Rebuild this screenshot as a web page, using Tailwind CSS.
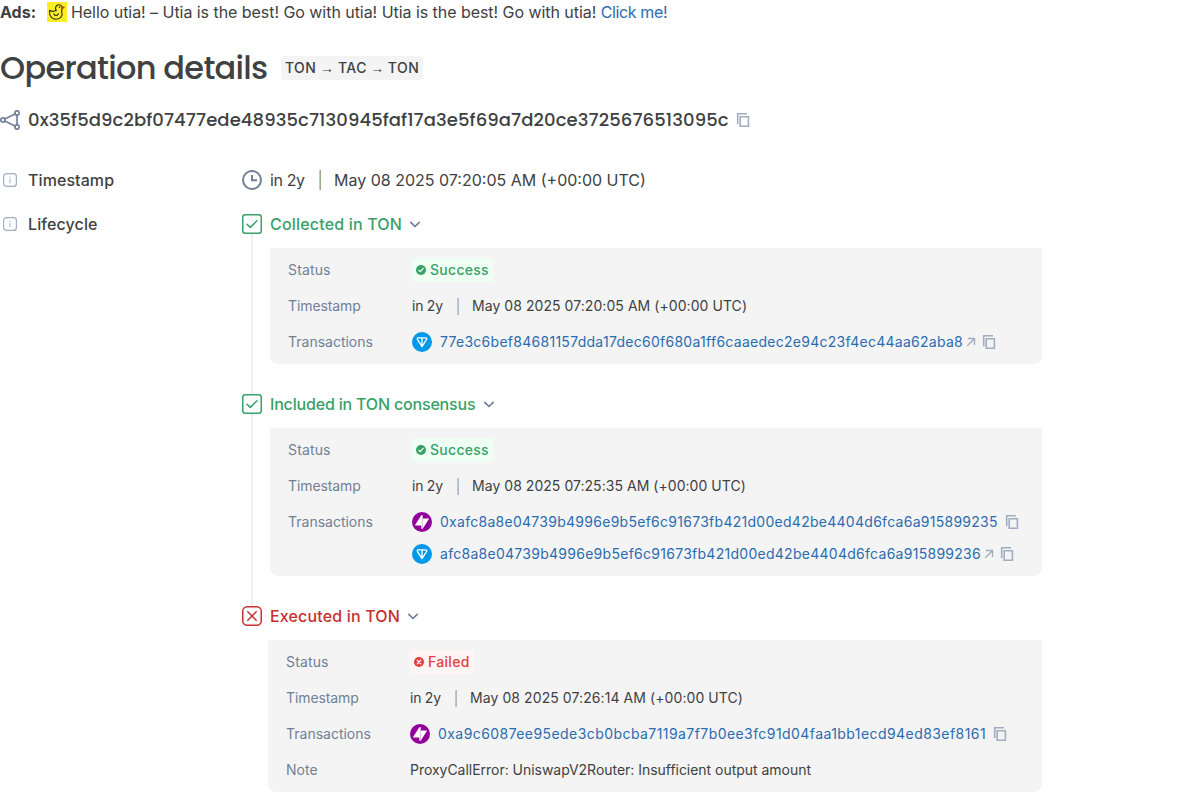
<!DOCTYPE html>
<html lang="en">
<head>
<meta charset="utf-8">
<title>Operation details</title>
<script src="https://cdn.jsdelivr.net/npm/@tailwindcss/browser@4"></script>
</head>
<body class="bg-white text-[#404142] font-[Inter,sans-serif] text-base leading-6 overflow-hidden">
<svg class="hidden">
  <symbol id="copy" viewBox="0 0 20 20"><path fill="none" stroke="currentColor" stroke-width="1.600" d="M7.200 6.700h8.200v9.600H7.200zM4.700 14.200V3.800H14"/></symbol>
  <symbol id="info" viewBox="0 0 20 20" fill="none" stroke="currentColor"><rect x="3.600" y="3.600" width="12.800" height="12.800" rx="3" stroke-width="1.200"/><path d="M10 9v4.200M10 6.700v1.300" stroke-width="1"/></symbol>
  <symbol id="check" viewBox="0 0 20 20" fill="none" stroke="currentColor"><rect x=".75" y=".75" width="18.500" height="18.500" rx="2.500" stroke-width="1.500"/><path d="M5 10.200l3.300 3.200 6.700-6.700" stroke-width="1.500" stroke-linecap="round" stroke-linejoin="round"/></symbol>
  <symbol id="cross" viewBox="0 0 20 20" fill="none" stroke="currentColor" stroke-width="1.500"><rect x=".75" y=".75" width="18.500" height="18.500" rx="4.500"/><path d="M5.800 5.800l8.400 8.400M14.200 5.800l-8.400 8.400" stroke-linecap="round"/></symbol>
  <symbol id="chev" viewBox="0 0 20 20"><path d="M5.800 8.300l4.200 4.200 4.200-4.200" fill="none" stroke="currentColor" stroke-width="1.700" stroke-linecap="round" stroke-linejoin="round"/></symbol>
  <symbol id="arrow" viewBox="0 0 12 12"><path d="M3 2.500h6.500V9M9.500 2.500L2.300 9.700" fill="none" stroke="currentColor" stroke-width="1.400"/></symbol>
  <symbol id="ok" viewBox="0 0 10 10"><circle cx="5" cy="5" r="5" fill="currentColor"/><path d="M2.800 5.300l1.500 1.400 2.900-3.300" fill="none" stroke="#f0fff4" stroke-width="1.200" stroke-linecap="round"/></symbol>
  <symbol id="fail" viewBox="0 0 10 10"><circle cx="5" cy="5" r="5" fill="currentColor"/><path d="M3.300 3.300l3.400 3.400M6.700 3.300L3.300 6.700" fill="none" stroke="#fff5f5" stroke-width="1.300" stroke-linecap="round"/></symbol>
  <symbol id="ton" viewBox="0 0 20 20"><circle cx="10" cy="10" r="10" fill="#0098ea"/><path d="M6.200 5.900h7.600c.8 0 1.200.8.800 1.400L10 14.600 5.400 7.300c-.4-.6 0-1.400.8-1.400zM10 6v8" fill="none" stroke="#fff" stroke-width="1.300" stroke-linejoin="round"/></symbol>
  <symbol id="tac" viewBox="0 0 20 20"><circle cx="10" cy="10" r="10" fill="#91009b"/><path d="M2.800 13.400L9.300 3.200h1.400v3.200H17.200l-6.500 10.400H9.300v-3.400z" fill="#fff"/><path d="M10.300 3.500v13" stroke="#d9a3dd" stroke-width=".8"/></symbol>
</svg>

<div class="flex items-center h-6">
  <span class="font-bold">Ads:</span>
  <svg class="ml-[11px] w-5 h-5" viewBox="0 0 20 20"><path fill="#fbee23" d="M0 0h20v20H0z"/><g fill="none" stroke="#25221c" stroke-width="1.100" stroke-linecap="round" stroke-linejoin="round"><path d="M2.600 8.300C4.500 9.600 7 9.600 9.300 8.600 7.500 6 9 2.700 12 2.700c2.500 0 3.800 2.400 2.900 4.600-.3.800-.6 1.500-.1 2.700 1.200 3.700-1.300 7.300-5.800 7.300S1.800 13 2.600 8.300z"/><path d="M6.800 11.700c.4 2.300 3.600 2.500 4.700.1"/><path d="M15 4.600l2.200.7-2 1.500" stroke="#d33c20"/></g><circle cx="12.600" cy="5.200" r=".8" fill="#25221c"/></svg>
  <span class="ml-1 whitespace-pre tracking-[-0.047px]">Hello utia! – Utia is the best! Go with utia! Utia is the best! Go with utia! <a class="text-[#2b6cb0] tracking-[-0.38px]">Click me!</a></span>
</div>

<div class="flex items-center h-10 mt-6">
  <h1 class="w-[281px] text-[32px] leading-10 font-medium font-[Poppins,Inter,sans-serif] tracking-[-0.7px] whitespace-nowrap">Operation details</h1>
  <span class="flex h-6 px-1 rounded bg-[#f4f4f4] text-sm leading-6 font-medium tracking-[0.35px] whitespace-nowrap">TON<span class="w-[22px] text-center font-normal tracking-normal font-[Liberation_Sans,sans-serif]">→</span>TAC<span class="w-[21px] text-center font-normal tracking-normal font-[Liberation_Sans,sans-serif]">→</span><span class="tracking-[0.5px]">TON</span></span>
</div>

<div class="flex items-center h-8 mt-4">
  <svg class="w-5 h-5 text-[#718096]" viewBox="0 0 20 20" fill="none" stroke="currentColor" stroke-width="1.700"><circle cx="2.900" cy="10" r="2.100"/><circle cx="17" cy="3" r="2.100"/><circle cx="17" cy="17" r="2.100"/><path d="M4.800 9L15 4M4.800 11L15 16M17 5.100v9.800"/></svg>
  <span class="ml-2 text-lg font-medium font-[Poppins,Inter,sans-serif] tracking-[0.09px] whitespace-nowrap">0x35f5d9c2bf07477ede48935c7130945faf17a3e5f69a7d20ce3725676513095c</span>
  <svg class="ml-1 w-5 h-5 text-[#a0aec0]"><use href="#copy"/></svg>
</div>

<div class="flex items-center h-6 mt-8">
  <svg class="w-5 h-5 text-[#a0aec0]"><use href="#info"/></svg>
  <span class="ml-2 w-[214px] font-medium tracking-[0.08px]">Timestamp</span>
  <svg class="w-5 h-5 text-[#718096]" viewBox="0 0 20 20" fill="none" stroke="currentColor" stroke-width="2"><circle cx="10" cy="10" r="9"/><path d="M10 5v5.200h5"/></svg>
  <span class="ml-2 w-[49px] tracking-[-0.4px]">in 2y</span><span class="w-0.5 h-5 mr-[13px] border-l border-r border-l-[#a3d3f0] border-r-[#9aa886]"></span><span>May 08 2025 07:20:05 AM (+00:00 UTC)</span>
</div>

<div class="flex mt-5">
  <div class="flex items-center h-6 w-[242px]">
    <svg class="w-5 h-5 text-[#a0aec0]"><use href="#info"/></svg>
    <span class="ml-2 font-medium tracking-[0.1px]">Lifecycle</span>
  </div>
  <div class="w-[800px]">
    <section class="flex">
      <div class="w-5 flex flex-col items-center"><svg class="w-5 h-5 mt-0.5 shrink-0 text-[#38a169]"><use href="#check"/></svg><div class="w-0.5 flex-1 -mb-0.5 bg-[#efefef]"></div></div>
      <div class="ml-2 flex-1 pb-7">
        <div class="flex items-center h-6 font-medium text-[#38a169] tracking-[0.18px]">Collected in TON<svg class="ml-[3px] w-5 h-5 text-[#718096]"><use href="#chev"/></svg></div>
        <div class="mt-3 bg-[#f4f4f4] rounded-b-lg px-[18px] pt-[10px] pb-[10px] grid grid-cols-[124px_1fr] gap-y-3 text-sm leading-6">
          <span class="text-[#718096] tracking-[0.15px]">Status</span><div><span class="inline-flex items-center gap-1 h-6 px-1 rounded bg-[#f0fff4] text-[#38a169] font-medium tracking-[0.28px]"><svg class="w-2.5 h-2.5"><use href="#ok"/></svg>Success</span></div>
          <span class="text-[#718096] tracking-[-0.1px]">Timestamp</span><div class="flex items-center"><span class="w-[45px] tracking-[-0.25px]">in 2y</span><span class="w-0.5 h-[17px] mr-[13px] border-l border-r border-l-[#d6c3ae] border-r-[#b0bac8]"></span><span class="tracking-[0.06px]">May 08 2025 07:20:05 AM (+00:00 UTC)</span></div>
          <span class="text-[#718096]">Transactions</span>
          <div class="flex items-center h-6"><svg class="w-5 h-5 mr-2"><use href="#ton"/></svg><a class="text-[#2b6cb0] tracking-[0.275px]">77e3c6bef84681157dda17dec60f680a1ff6caaedec2e94c23f4ec44aa62aba8</a><svg class="ml-0.5 w-3 h-3 text-[#a0aec0]"><use href="#arrow"/></svg><svg class="ml-[2px] w-5 h-5 text-[#a0aec0]"><use href="#copy"/></svg></div>
        </div>
      </div>
    </section>
    <section class="flex">
      <div class="w-5 flex flex-col items-center"><svg class="w-5 h-5 mt-0.5 shrink-0 text-[#38a169]"><use href="#check"/></svg><div class="w-0.5 flex-1 -mb-0.5 bg-[#efefef]"></div></div>
      <div class="ml-2 flex-1 pb-7">
        <div class="flex items-center h-6 font-medium text-[#38a169] tracking-[-0.18px]">Included in TON consensus<svg class="ml-1 w-5 h-5 text-[#718096]"><use href="#chev"/></svg></div>
        <div class="mt-3 bg-[#f4f4f4] rounded-b-lg px-[18px] pt-[10px] pb-[10px] grid grid-cols-[124px_1fr] gap-y-3 text-sm leading-6">
          <span class="text-[#718096] tracking-[0.15px]">Status</span><div><span class="inline-flex items-center gap-1 h-6 px-1 rounded bg-[#f0fff4] text-[#38a169] font-medium tracking-[0.28px]"><svg class="w-2.5 h-2.5"><use href="#ok"/></svg>Success</span></div>
          <span class="text-[#718096] tracking-[-0.1px]">Timestamp</span><div class="flex items-center"><span class="w-[45px] tracking-[-0.25px]">in 2y</span><span class="w-0.5 h-[17px] mr-[13px] border-l border-r border-l-[#d6c3ae] border-r-[#b0bac8]"></span><span class="tracking-[0.04px]">May 08 2025 07:25:35 AM (+00:00 UTC)</span></div>
          <span class="text-[#718096]">Transactions</span>
          <div class="flex flex-col gap-2">
            <div class="flex items-center h-6"><svg class="w-5 h-5 mr-2"><use href="#tac"/></svg><a class="text-[#2b6cb0] tracking-[0.273px]">0xafc8a8e04739b4996e9b5ef6c91673fb421d00ed42be4404d6fca6a915899235</a><svg class="ml-1 w-5 h-5 text-[#a0aec0]"><use href="#copy"/></svg></div>
            <div class="flex items-center h-6"><svg class="w-5 h-5 mr-2"><use href="#ton"/></svg><a class="text-[#2b6cb0] tracking-[0.273px]">afc8a8e04739b4996e9b5ef6c91673fb421d00ed42be4404d6fca6a915899236</a><svg class="ml-0.5 w-3 h-3 text-[#a0aec0]"><use href="#arrow"/></svg><svg class="ml-[2px] w-5 h-5 text-[#a0aec0]"><use href="#copy"/></svg></div>
          </div>
        </div>
      </div>
    </section>
    <section class="flex">
      <svg class="w-5 h-5 mt-0.5 shrink-0 text-[#c53030]"><use href="#cross"/></svg>
      <div class="ml-1.5 flex-1">
        <div class="flex items-center h-6 pl-0.5 font-medium text-[#c53030] tracking-[0.16px]">Executed in TON<svg class="ml-[3px] w-5 h-5 text-[#718096]"><use href="#chev"/></svg></div>
        <div class="mt-3 bg-[#f4f4f4] rounded-b-lg px-[18px] pt-[10px] pb-[10px] grid grid-cols-[124px_1fr] gap-y-3 text-sm leading-6">
          <span class="text-[#718096] tracking-[0.15px]">Status</span><div><span class="inline-flex items-center gap-1 h-6 px-1 rounded bg-[#fff5f5] text-[#e53e3e] font-medium tracking-[0.3px]"><svg class="w-2.5 h-2.5"><use href="#fail"/></svg>Failed</span></div>
          <span class="text-[#718096] tracking-[-0.1px]">Timestamp</span><div class="flex items-center"><span class="w-[45px] tracking-[-0.25px]">in 2y</span><span class="w-0.5 h-[17px] mr-[13px] border-l border-r border-l-[#d6c3ae] border-r-[#b0bac8]"></span><span class="tracking-[0.08px]">May 08 2025 07:26:14 AM (+00:00 UTC)</span></div>
          <span class="text-[#718096]">Transactions</span>
          <div class="flex items-center h-6"><svg class="w-5 h-5 mr-2"><use href="#tac"/></svg><a class="text-[#2b6cb0] tracking-[0.43px]">0xa9c6087ee95ede3cb0bcba7119a7f7b0ee3fc91d04faa1bb1ecd94ed83ef8161</a><svg class="ml-1 w-5 h-5 text-[#a0aec0]"><use href="#copy"/></svg></div>
          <span class="text-[#718096]">Note</span><span class="tracking-[-0.03px]">ProxyCallError: UniswapV2Router: Insufficient output amount</span>
        </div>
      </div>
    </section>
  </div>
</div>
</body>
</html>
